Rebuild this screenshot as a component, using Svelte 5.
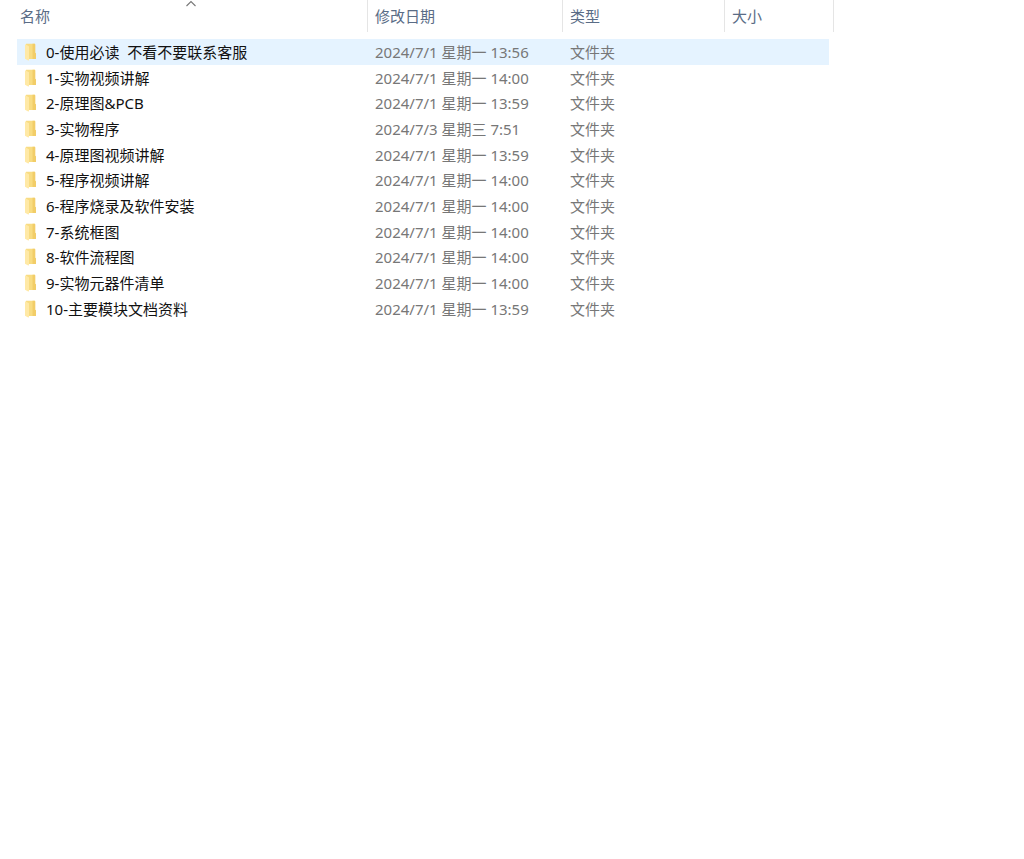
<script>
  const columns = [
    { key: 'name', label: '名称' },
    { key: 'modified', label: '修改日期' },
    { key: 'type', label: '类型' },
    { key: 'size', label: '大小' }
  ];

  const folders = [
    { name: '0-使用必读  不看不要联系客服', modified: '2024/7/1 星期一 13:56' },
    { name: '1-实物视频讲解', modified: '2024/7/1 星期一 14:00' },
    { name: '2-原理图&PCB', modified: '2024/7/1 星期一 13:59' },
    { name: '3-实物程序', modified: '2024/7/3 星期三 7:51' },
    { name: '4-原理图视频讲解', modified: '2024/7/1 星期一 13:59' },
    { name: '5-程序视频讲解', modified: '2024/7/1 星期一 14:00' },
    { name: '6-程序烧录及软件安装', modified: '2024/7/1 星期一 14:00' },
    { name: '7-系统框图', modified: '2024/7/1 星期一 14:00' },
    { name: '8-软件流程图', modified: '2024/7/1 星期一 14:00' },
    { name: '9-实物元器件清单', modified: '2024/7/1 星期一 14:00' },
    { name: '10-主要模块文档资料', modified: '2024/7/1 星期一 13:59' }
  ];

  let active = $state(0);
</script>

<main>
  <table>
    <thead>
      <tr>
        {#each columns as column}
          <th scope="col" class={column.key} aria-sort={column.key === 'name' ? 'ascending' : undefined}>
            <button type="button">{column.label}</button>
            {#if column.key === 'name'}
              <svg class="sort" width="11" height="7" viewBox="0 0 11 7" aria-hidden="true">
                <path d="M1 6 5.5 1.6 10 6" fill="none" stroke="#777" stroke-width="1.1" />
              </svg>
            {/if}
          </th>
        {/each}
      </tr>
    </thead>
    <tbody>
      {#each folders as folder, i}
        <tr class:active={i === active} onclick={() => (active = i)}>
          <td class="name">
            <div class="entry">
              <svg width="11" height="18" viewBox="0 0 11 18" aria-hidden="true">
                <path d="M1 .8h8.6q.6 0 .6.6v8.4l.8.8v4.9q0 .6-.6.6H2z" fill="#f8dc82" />
                <path d="M7.5 .8h2.1q.6 0 .6.6v8.4l.8.8v4.9q0 .6-.6.6H7.5z" fill="#f2cd68" />
                <path d="M0 1.2 3.5 3q.5.3.5.8v13q0 1-.8.6L0 15.8z" fill="#ffe9a6" />
              </svg>
              <span>{folder.name}</span>
            </div>
          </td>
          <td>{folder.modified}</td>
          <td>文件夹</td>
          <td></td>
        </tr>
      {/each}
    </tbody>
  </table>
</main>

<style>
  :global(body) {
    margin: 0;
    background: #fff;
  }

  main {
    padding: 0 190px 0 13px;
    font: 15px/24px 'Noto Sans', 'Noto Sans CJK SC', sans-serif;
    color: #777;
  }

  table {
    width: 100%;
    table-layout: fixed;
    border-collapse: separate;
    border-spacing: 0;
  }

  th {
    position: relative;
    padding: 0 0 7px;
    font-weight: 400;
    text-align: left;
  }

  th.modified {
    width: 195px;
  }

  th.type {
    width: 162px;
  }

  th.size {
    width: 109px;
  }

  button {
    display: block;
    width: 100%;
    height: 32px;
    padding: 0 7px;
    border: 0;
    border-right: 1px solid #e5e5e5;
    background: none;
    color: #5a6c86;
    font: inherit;
    text-align: left;
  }

  .sort {
    position: absolute;
    top: 0;
    left: 50%;
    transform: translateX(-50%);
  }

  td {
    height: 26px;
    padding: 0 7px;
    white-space: pre;
  }

  tr:nth-child(3n + 2) td {
    height: 25px;
  }

  td.name {
    color: #111;
  }

  .entry {
    display: flex;
    align-items: center;
    gap: 10px;
    padding-left: 5px;
  }

  .active td {
    background: linear-gradient(#e5f3ff, #e5f3ff) no-repeat;
  }

  .active td:first-child {
    background-size: calc(100% - 4px) 100%;
    background-position: right;
  }

  .active td:last-child {
    background-size: calc(100% - 5px) 100%;
  }
</style>
